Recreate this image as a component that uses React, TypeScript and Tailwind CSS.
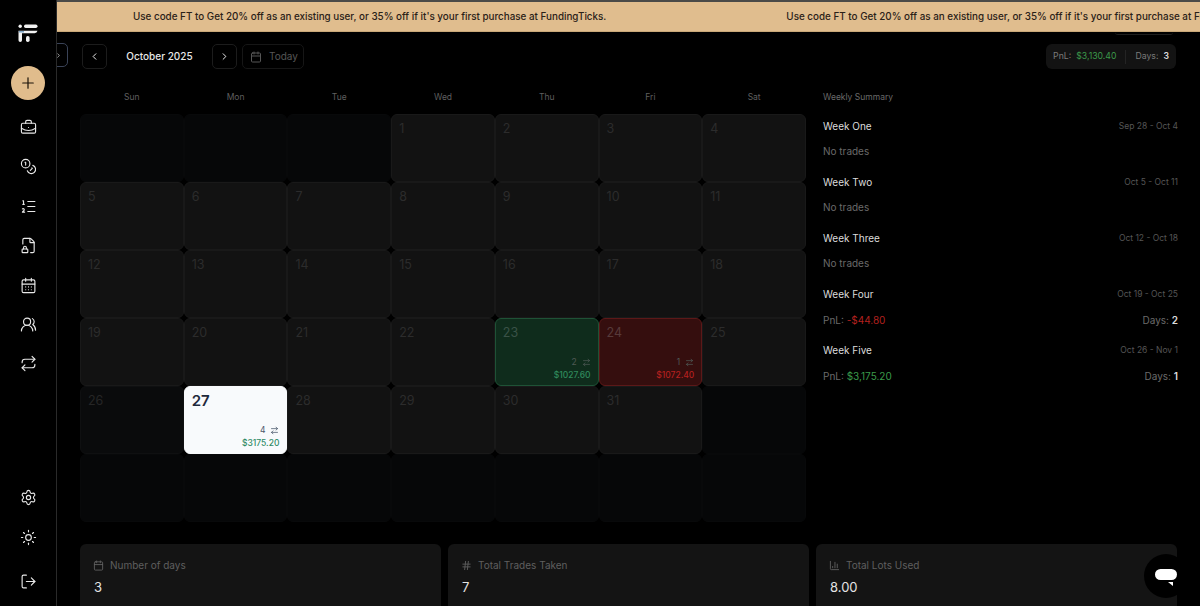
import { Plus, BriefcaseBusiness, ListOrdered, FileLock2, CalendarDays, UsersRound, Repeat, Settings, Sun, LogOut, ChevronLeft, ChevronRight, Calendar, Hash, ChartColumn, Coins, ArrowRightLeft } from "lucide-react";

const Banner = "Use code FT to Get 20% off as an existing user, or 35% off if it's your first purchase at FundingTicks.";

type Cell = { d?: number; kind: "dim" | "soft" | "base" | "green" | "red" | "white"; n?: number; v?: string };

const cells: Cell[] = [
  { kind: "dim" }, { kind: "dim" }, { kind: "dim" },
  ...[1, 2, 3, 4].map((d) => ({ d, kind: "base" as const })),
  ...[5, 6, 7, 8, 9, 10, 11, 12, 13, 14, 15, 16, 17, 18, 19, 20, 21, 22].map((d) => ({ d, kind: "base" as const })),
  { d: 23, kind: "green", n: 2, v: "$1027.60" },
  { d: 24, kind: "red", n: 1, v: "$1072.40" },
  { d: 25, kind: "base" },
  { d: 26, kind: "soft" },
  { d: 27, kind: "white", n: 4, v: "$3175.20" },
  { d: 28, kind: "base" }, { d: 29, kind: "base" }, { d: 30, kind: "base" }, { d: 31, kind: "base" },
  { kind: "dim" },
  { kind: "dim" }, { kind: "dim" }, { kind: "dim" }, { kind: "dim" }, { kind: "dim" }, { kind: "dim" }, { kind: "dim" },
];

const styles: Record<Cell["kind"], string> = {
  dim: "bg-[#060708] border-[#08090a]",
  soft: "bg-[#0a0b0c] border-[#0f1011]",
  base: "bg-[#121212] border-[#191919]",
  green: "bg-[#0f2c1c] border-[#1f5236]",
  red: "bg-[#350e0e] border-[#5c1818]",
  white: "bg-[#f8fafc] border-[#f8fafc]",
};

const numStyles: Record<Cell["kind"], string> = {
  dim: "text-[#2c2c2c]",
  soft: "text-[#262626]",
  base: "text-[#2c2c2c]",
  green: "text-[#3a5247]",
  red: "text-[#573a3a]",
  white: "text-[#1e293b] font-semibold text-[15px]",
};

const valueStyles: Record<Cell["kind"], string> = {
  dim: "",
  soft: "",
  base: "",
  green: "text-[#2f8a5c]",
  red: "text-[#b3201f]",
  white: "text-[#2f8a65]",
};

const weeks = [
  { t: "Week One", r: "Sep 28 - Oct 4" },
  { t: "Week Two", r: "Oct 5 - Oct 11" },
  { t: "Week Three", r: "Oct 12 - Oct 18" },
  { t: "Week Four", r: "Oct 19 - Oct 25", pnl: "-$44.80", c: "text-[#b3201f]", days: 2 },
  { t: "Week Five", r: "Oct 26 - Nov 1", pnl: "$3,175.20", c: "text-[#3b9a4a]", days: 1 },
];

const sideTop = [BriefcaseBusiness, Coins, ListOrdered, FileLock2, CalendarDays, UsersRound, Repeat];

function Logo() {
  return (
    <svg width="20" height="20" viewBox="0 0 20 20" fill="#f1f1f1">
      <circle cx="2.2" cy="2.2" r="1.7" />
      <rect x="6" y="0.5" width="13.5" height="3.4" rx="1.7" />
      <path d="M0.5 6.8h19v0a3 3 0 0 1-3 2.4H4v7a1.7 1.7 0 0 1-3.5 0z" />
      <rect x="8" y="12" width="3.6" height="6" rx="1.7" />
      <rect x="1" y="7" width="5" height="1.5" fill="#7ea6c8" />
    </svg>
  );
}

export default function App() {
  return (
    <div className="w-[1200px] h-[606px] overflow-hidden flex bg-black font-['Inter',sans-serif] text-white">
      <aside className="relative z-10 bg-black w-[57px] shrink-0 h-full border-r border-[#2a2a2a] flex flex-col items-center pt-[24px] text-[#e8e8e8]">
        <Logo />
        <button className="mt-[22px] w-[34px] h-[34px] rounded-full bg-[#e0bc8c] flex items-center justify-center text-[#1a1208]">
          <Plus size={18} strokeWidth={1.6} />
        </button>
        <div className="mt-[19px] flex flex-col gap-[22.4px]">
          {sideTop.map((I, i) => (
            <I key={i} size={17} strokeWidth={1.6} />
          ))}
        </div>
        <div className="mt-auto flex flex-col items-center mb-[16px]">
          <Settings size={17} strokeWidth={1.6} />
          <Sun size={17} strokeWidth={1.6} className="mt-[23px]" />
          <LogOut size={17} strokeWidth={1.6} className="mt-[27px]" />
        </div>
      </aside>

      <main className="relative flex-1 min-w-0 h-full">
        <div className="h-[2px] bg-[#4a4a48]" />
        <div className="h-[30px] bg-[#e0bd8e] border-b border-[#c9a878] overflow-hidden flex items-center text-[#2a2118] text-[9.85px] font-medium whitespace-nowrap pl-[76px] gap-[180px]">
          <span className="shrink-0">{Banner}</span>
          <span className="shrink-0">{Banner}</span>
        </div>

        <div className="absolute left-[1058px] top-[32px] w-[58px] h-[3px] rounded-b-[4px] border-b border-[#1f1f1f]" />

        <div className="absolute left-[-9px] top-[43px] w-[20px] h-[24px] rounded-r-[5px] border border-[#3a4357] flex items-center justify-center bg-black">
          <ChevronRight size={7} className="text-white" />
        </div>

        <div className="pl-[23px] pr-[22px]">
          <div className="h-[50px] flex items-center pl-[2px] pb-[1px]">
            <button className="w-[25px] h-[25px] rounded-[5px] border border-[#1c1c1c] flex items-center justify-center">
              <ChevronLeft size={11} />
            </button>
            <span className="w-[105px] text-center text-[10px] font-medium text-[#e8e8e8]">October 2025</span>
            <button className="w-[25px] h-[25px] rounded-[5px] border border-[#1c1c1c] flex items-center justify-center">
              <ChevronRight size={11} />
            </button>
            <button className="ml-[5px] w-[62px] h-[25px] rounded-[5px] border border-[#161616] flex items-center gap-[7px] pl-[7px] text-[#565656] text-[10px]">
              <Calendar size={12} />
              Today
            </button>
            <div className="ml-auto mr-[2px] h-[25px] rounded-[6px] bg-[#131313] flex items-center px-[7px] text-[8.7px] text-[#7a7a7a]">
              <span>PnL:</span>
              <span className="ml-[5px] text-[#3b9a4a]">$3,130.40</span>
              <span className="mx-[9px] w-px h-[14px] bg-[#242424]" />
              <span>Days:</span>
              <span className="ml-[5px] text-[#dcdcdc] font-semibold">3</span>
            </div>
          </div>

          <div className="flex mt-[4px]">
            <div className="w-[726px] shrink-0">
              <div className="grid grid-cols-7 h-[28px] pb-[6px] text-[8.5px] text-[#5f5f5f] text-center items-center">
                {["Sun", "Mon", "Tue", "Wed", "Thu", "Fri", "Sat"].map((d) => (
                  <span key={d}>{d}</span>
                ))}
              </div>
              <div className="grid grid-cols-7 grid-rows-[repeat(6,68px)]">
                {cells.map((c, i) => (
                  <div key={i} className={`rounded-[6px] border flex flex-col px-[7px] pt-[5px] pb-[6px] ${styles[c.kind]}`}>
                    {c.d !== undefined && (
                      <span className={`text-[12.5px] leading-[17px] ${numStyles[c.kind]}`}>{c.d}</span>
                    )}
                    {c.v && (
                      <div className="mt-auto flex flex-col items-end leading-none">
                        <span className={`flex items-center gap-[5px] text-[8.5px] ${c.kind === "white" ? "text-[#475569]" : "text-[#4f5a55]"}`}>
                          {c.n}
                          <ArrowRightLeft size={9} />
                        </span>
                        <span className={`mt-[4px] text-[8.5px] font-medium ${valueStyles[c.kind]}`}>{c.v}</span>
                      </div>
                    )}
                  </div>
                ))}
              </div>
            </div>

            <div className="ml-[17px] flex-1 min-w-0">
              <div className="h-[28px] pb-[6px] flex items-center text-[8.5px] text-[#6a6a6a]">Weekly Summary</div>
              <div className="flex flex-col">
                {weeks.map((w) => (
                  <div key={w.t} className="h-[56px] pt-[3px]">
                    <div className="h-[18px] flex items-center justify-between">
                      <span className="text-[10px] font-normal text-[#dcdcdc]">{w.t}</span>
                      <span className="text-[8.5px] text-[#555555]">{w.r}</span>
                    </div>
                    <div className={`h-[18px] flex items-center justify-between text-[10px] text-[#6a6a6a] ${w.pnl ? "mt-[8px]" : "mt-[7px]"}`}>
                      {w.pnl ? (
                        <>
                          <span>
                            PnL: <span className={w.c}>{w.pnl}</span>
                          </span>
                          <span>
                            Days: <span className="text-[#dcdcdc] font-semibold">{w.days}</span>
                          </span>
                        </>
                      ) : (
                        <span>No trades</span>
                      )}
                    </div>
                  </div>
                ))}
              </div>
            </div>
          </div>

          <div className="mt-[22px] grid grid-cols-3 gap-[7px] w-[1097px]">
            {[
              { I: Calendar, t: "Number of days", v: "3" },
              { I: Hash, t: "Total Trades Taken", v: "7" },
              { I: ChartColumn, t: "Total Lots Used", v: "8.00" },
            ].map(({ I, t, v }) => (
              <div key={t} className="h-[80px] rounded-[6px] bg-[#141414] px-[13px] pt-[14px]">
                <div className="flex items-center gap-[6px] text-[10px] text-[#5f5f5f]">
                  <I size={11} />
                  {t}
                </div>
                <div className="mt-[5px] pl-px text-[13px] text-[#e4e4e4]">{v}</div>
              </div>
            ))}
          </div>
        </div>

        <button className="absolute left-[1087px] top-[554px] w-[44px] h-[44px] rounded-full bg-black flex items-center justify-center">
          <svg width="22" height="20" viewBox="0 0 22 20" fill="white">
            <rect x="0" y="3" width="22" height="11" rx="5.5" />
            <path d="M13 16h5v4z" />
          </svg>
        </button>
      </main>
    </div>
  );
}
